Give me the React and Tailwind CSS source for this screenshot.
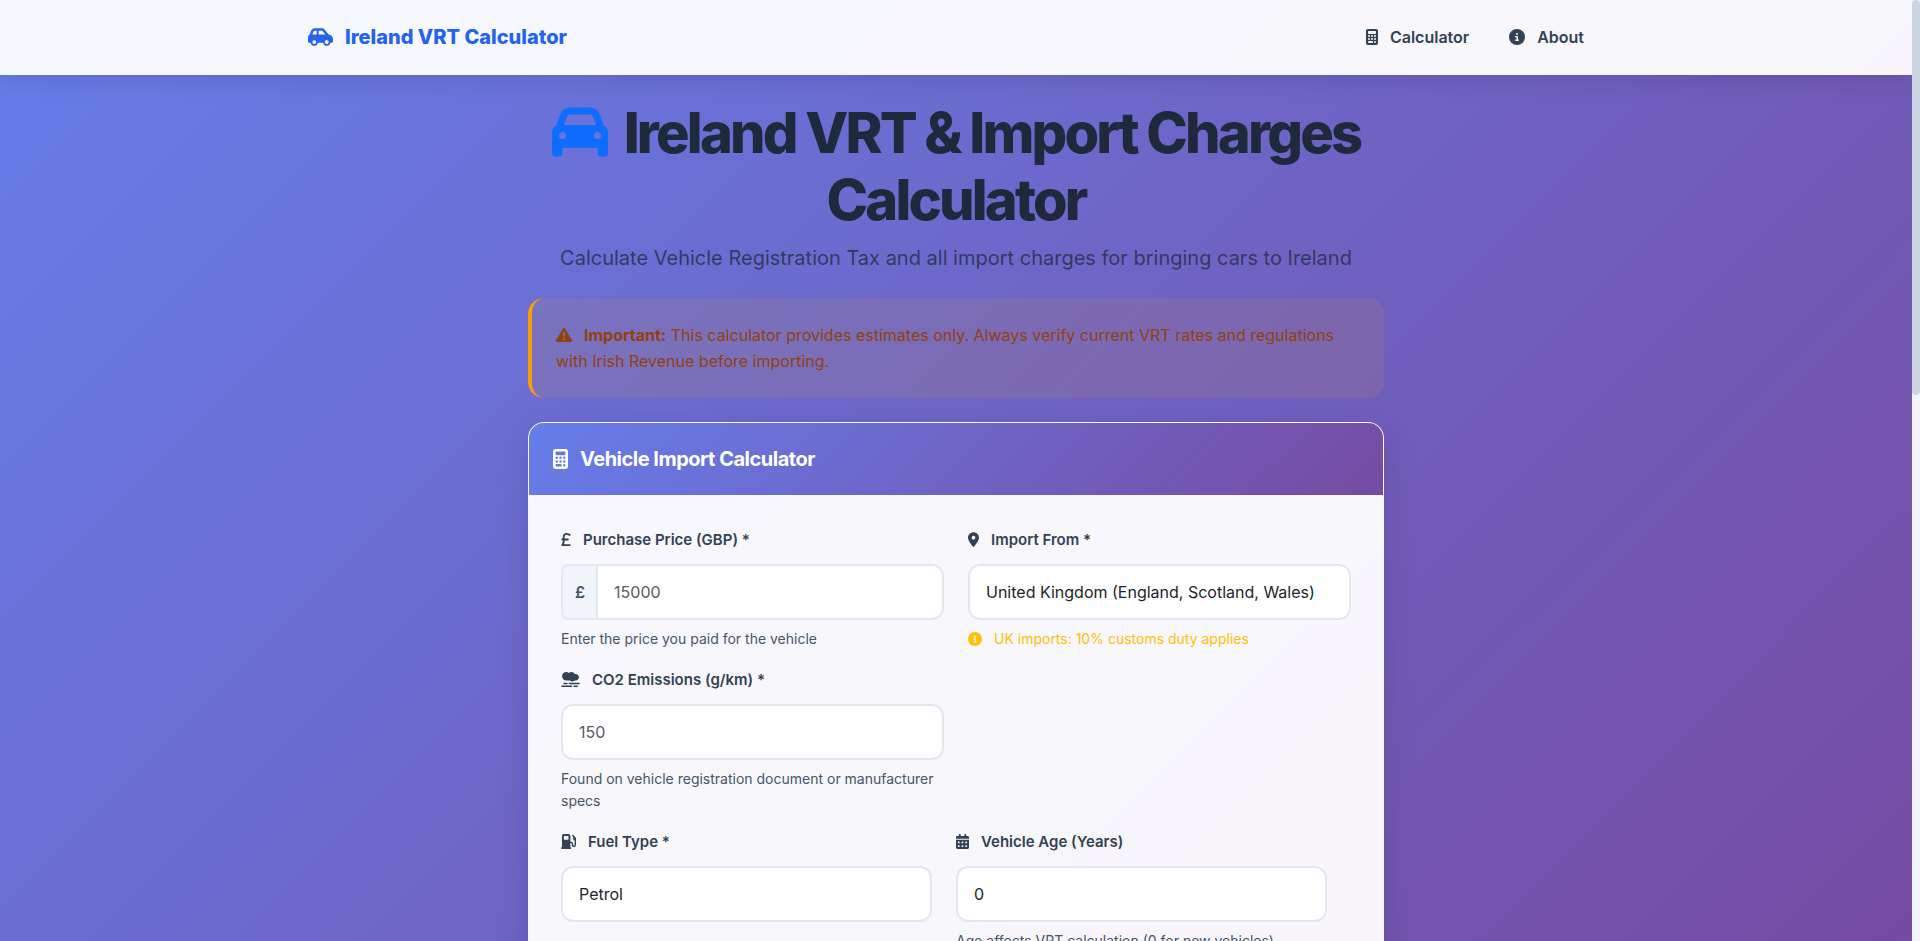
import React from "react";
import {
  FaCalculator,
  FaCalendarDays,
  FaCar,
  FaCarSide,
  FaCircleInfo,
  FaGasPump,
  FaLocationDot,
  FaSmog,
  FaSterlingSign,
  FaTriangleExclamation,
} from "react-icons/fa6";

const control =
  "h-14 w-full appearance-none rounded-xl border-2 border-[#e2e8f0] bg-white px-4 text-base text-[#212529] outline-none placeholder:text-[#595c5f] focus:border-[#667eea]";

function Field({ id, icon: Icon, iconWidth, label, help, warning, children }) {
  return (
    <div>
      <label
        htmlFor={id}
        className="mb-3 flex items-center gap-3 text-[15px] leading-[25px] font-semibold text-[#334155]"
      >
        <Icon className={`${iconWidth} shrink-0`} aria-hidden="true" />
        {label}
      </label>
      {children}
      {help && <p className="mt-2 text-sm leading-[22px] text-[#475569]">{help}</p>}
      {warning && (
        <p className="mt-2 flex items-center gap-3 text-sm leading-[22px] text-[#ffc107]">
          <FaCircleInfo className="shrink-0" aria-hidden="true" />
          {warning}
        </p>
      )}
    </div>
  );
}

function Navbar() {
  return (
    <header className="relative bg-white/95 shadow-[0_4px_24px_rgba(0,0,0,0.12)]">
      <nav className="mx-auto flex h-[75px] max-w-[1320px] items-center justify-between px-3 pb-0.5">
        <a href="#" className="flex items-center gap-3 text-xl font-extrabold text-[#2563eb]">
          <FaCarSide className="w-[25px]" aria-hidden="true" />
          Ireland VRT Calculator
        </a>
        <div className="flex items-center gap-10 pr-5 text-base font-semibold text-[#334155]">
          <a href="#calculator" className="flex items-center gap-3">
            <FaCalculator className="w-3" aria-hidden="true" />
            Calculator
          </a>
          <a href="#about" className="flex items-center gap-3">
            <FaCircleInfo aria-hidden="true" />
            About
          </a>
        </div>
      </nav>
    </header>
  );
}

function CalculatorCard() {
  return (
    <section
      id="calculator"
      className="overflow-hidden rounded-2xl border border-white/95 bg-white/95 bg-clip-padding shadow-[0_8px_32px_rgba(0,0,0,0.12)]"
    >
      <h2 className="flex h-[72px] items-center gap-3 bg-[linear-gradient(135deg,#667eea_0%,#764ba2_100%)] px-6 text-xl font-bold tracking-tight text-white">
        <FaCalculator className="w-[15px]" aria-hidden="true" />
        Vehicle Import Calculator
      </h2>
      <form className="flex flex-col gap-[17px] p-8">
        <div className="grid grid-cols-2 gap-x-6 gap-y-[17px]">
          <Field
            id="price"
            icon={FaSterlingSign}
            iconWidth="w-[10px]"
            label="Purchase Price (GBP) *"
            help="Enter the price you paid for the vehicle"
          >
            <div className="flex">
              <span className="flex items-center rounded-l-md border-2 border-r-0 border-[#e2e8f0] bg-[#f1f5f9] px-3 font-semibold text-[#475569]">
                £
              </span>
              <input
                id="price"
                type="number"
                placeholder="15000"
                className="-ml-px h-14 w-full min-w-0 rounded-r-xl border-2 border-[#e2e8f0] bg-white px-4 text-base text-[#212529] outline-none placeholder:text-[#595c5f] focus:border-[#667eea]"
              />
            </div>
          </Field>
          <Field
            id="origin"
            icon={FaLocationDot}
            iconWidth="w-[11px]"
            label="Import From *"
            warning="UK imports: 10% customs duty applies"
          >
            <select id="origin" className={control}>
              <option>United Kingdom (England, Scotland, Wales)</option>
              <option>Northern Ireland</option>
            </select>
          </Field>
          <Field
            id="co2"
            icon={FaSmog}
            iconWidth="w-[19px]"
            label="CO2 Emissions (g/km) *"
            help="Found on vehicle registration document or manufacturer specs"
          >
            <input id="co2" type="number" placeholder="150" className={control} />
          </Field>
        </div>
        <div className="grid grid-cols-2 gap-x-6 pr-6">
          <Field id="fuel" icon={FaGasPump} iconWidth="w-[15px]" label="Fuel Type *">
            <select id="fuel" className={control}>
              <option>Petrol</option>
              <option>Diesel</option>
            </select>
          </Field>
          <Field
            id="age"
            icon={FaCalendarDays}
            iconWidth="w-[13px]"
            label="Vehicle Age (Years)"
            help="Age affects VRT calculation (0 for new vehicles)"
          >
            <input id="age" type="number" defaultValue="0" className={control} />
          </Field>
        </div>
      </form>
    </section>
  );
}

export default function App() {
  return (
    <div className="flex h-screen overflow-hidden bg-[#f1f5f9] font-['Inter',sans-serif]">
      <div className="min-w-0 flex-1 overflow-hidden bg-[linear-gradient(135deg,#667eea_0%,#764ba2_100%)]">
        <Navbar />
        <main className="mx-auto flex max-w-[880px] flex-col gap-6 px-3 pt-[25px]">
          <div className="text-center">
            <h1 className="text-[56px] leading-[67px] font-extrabold tracking-tighter text-[#1e293b]">
              <FaCar className="mr-4 inline-block align-[-7px] text-[#0d6efd]" aria-hidden="true" />
              Ireland VRT &amp; Import Charges Calculator
            </h1>
            <p className="mt-2 text-xl leading-8 text-[#1e293b]/75">
              Calculate Vehicle Registration Tax and all import charges for bringing cars to Ireland
            </p>
          </div>
          <div
            role="alert"
            className="rounded-2xl border-l-4 border-[#f59e0b] bg-[#f59e0b]/10 p-6 leading-[26px] text-[#92400e]"
          >
            <FaTriangleExclamation className="mr-3 inline-block align-[-2px]" aria-hidden="true" />
            <strong className="font-bold">Important:</strong> This calculator provides estimates only. Always
            verify current VRT rates and regulations with Irish Revenue before importing.
          </div>
          <CalculatorCard />
        </main>
      </div>
      <div className="w-2 shrink-0" aria-hidden="true">
        <div className="h-[42%] rounded bg-[#cbd5e1]" />
      </div>
    </div>
  );
}
